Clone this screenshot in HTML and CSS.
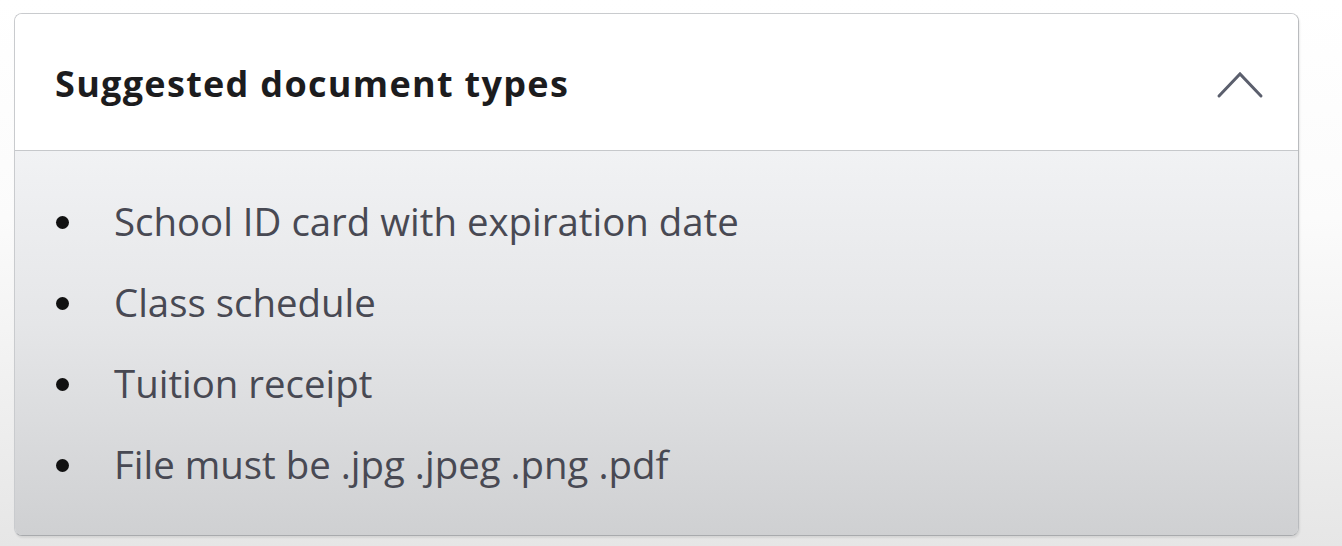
FILE: index.html
```html
<!DOCTYPE html>
<html lang="en">
<head>
<meta charset="utf-8">
<title>Suggested document types</title>
<link rel="stylesheet" href="styles.css">
</head>
<body>
<main class="page">
  <section class="card">
    <header class="card-header">
      <h2 class="card-title">Suggested document types</h2>
      <svg class="chevron" width="48" height="30" viewBox="0 0 48 30" aria-hidden="true">
        <polyline points="3,27 24,5 45,27" fill="none" stroke="#5b5f6d" stroke-width="3" stroke-linecap="round" stroke-linejoin="miter"/>
      </svg>
    </header>
    <ul class="doc-list">
      <li class="doc-item">School ID card with expiration date</li>
      <li class="doc-item">Class schedule</li>
      <li class="doc-item">Tuition receipt</li>
      <li class="doc-item">File must be .jpg .jpeg .png .pdf</li>
    </ul>
  </section>
</main>
</body>
</html>
```

FILE: styles.css
```css
html, body {
  margin: 0;
  padding: 0;
}
body {
  width: 1342px;
  height: 546px;
  overflow: hidden;
  background: linear-gradient(180deg, #ffffff 0%, #fbfbfb 40%, #e6e6e6 100%);
  font-family: "Open Sans", "Noto Sans", sans-serif;
}
.page {
  padding: 13px 43px 9px 14px;
}
.card {
  border: 1px solid #c9cbce;
  border-bottom-color: #a8aaad;
  border-right-color: #b9bbbe;
  border-radius: 8px;
  overflow: hidden;
  box-shadow: 1px 2px 2px rgba(0, 0, 0, 0.08);
}
.card-header {
  height: 136px;
  display: flex;
  align-items: center;
  justify-content: space-between;
  padding: 0 34px 0 40px;
  background: #ffffff;
  border-bottom: 1px solid #c6c8cb;
}
.card-title {
  margin: 0;
  font-size: 36px;
  font-weight: 700;
  color: #1c1c1e;
  letter-spacing: 1.3px;
  position: relative;
  top: 1px;
}
.chevron {
  display: block;
  position: relative;
  top: 2px;
}
.doc-list {
  list-style: none;
  margin: 0;
  padding: 29px 40px 31px 41px;
  background: linear-gradient(180deg, #f1f2f4 0%, #e5e6e8 45%, #cfd0d2 100%);
}
.doc-item {
  display: flex;
  align-items: center;
  height: 81px;
  font-size: 38.4px;
  color: #484953;
  letter-spacing: 0;
}
.doc-item::before {
  content: "";
  width: 13px;
  height: 13px;
  border-radius: 50%;
  background: #111;
  margin-right: 45px;
  flex: none;
  position: relative;
  top: 2px;
}
```
